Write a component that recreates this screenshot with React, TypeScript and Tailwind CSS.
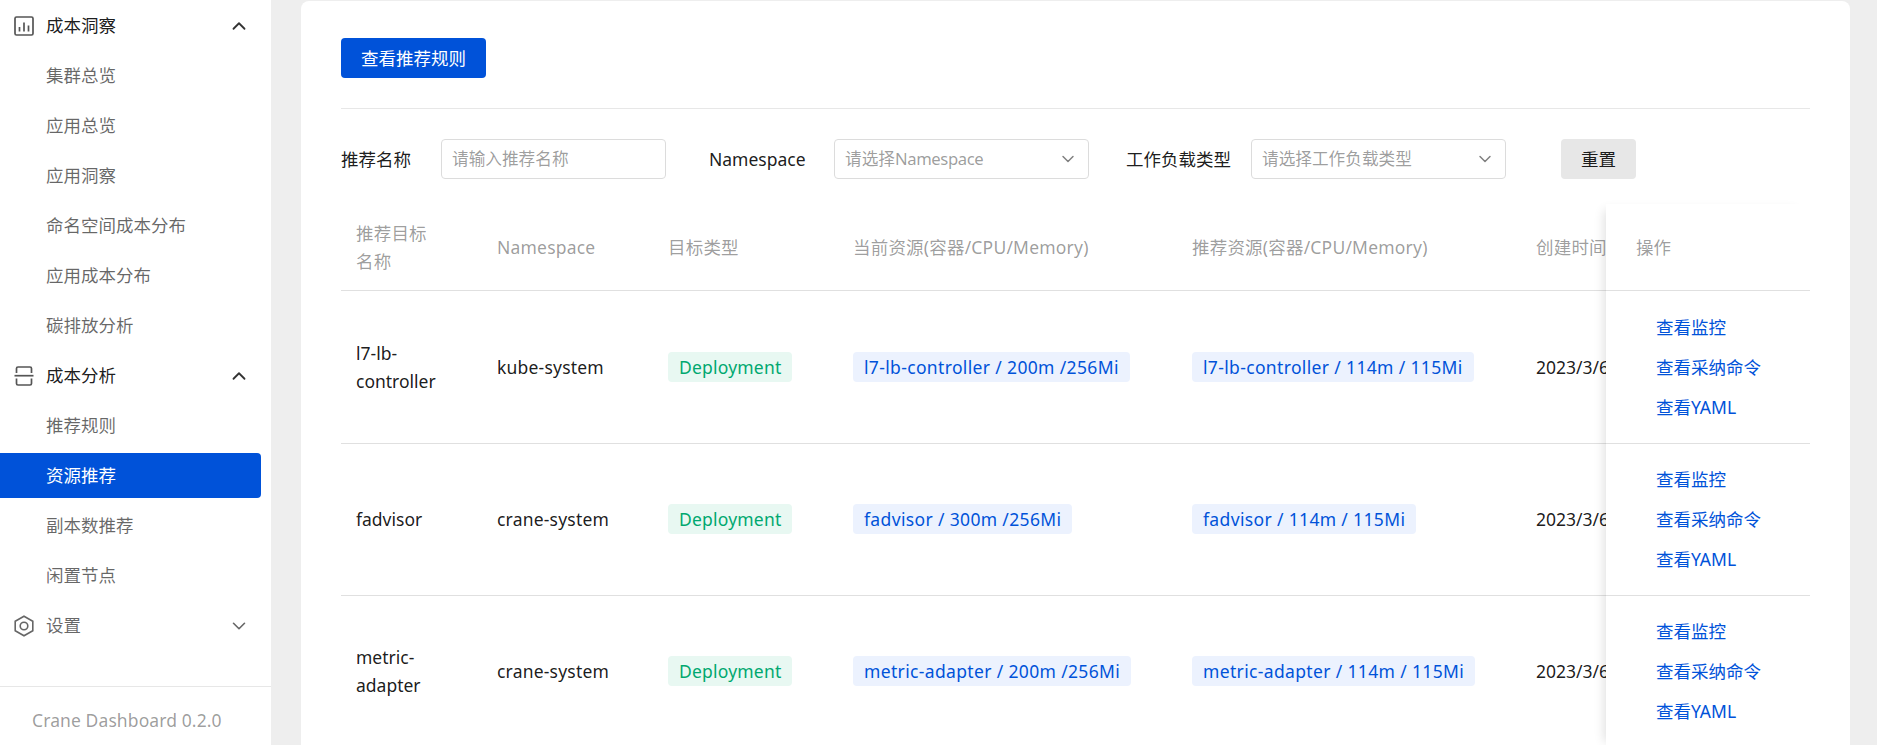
import { ChevronDown, ChevronUp } from "lucide-react";

const font = { fontFamily: '"Noto Sans", "Noto Sans CJK SC", sans-serif' };

const rows = [
	{
		name: ["l7-lb-", "controller"],
		ns: "kube-system",
		current: "l7-lb-controller / 200m /256Mi",
		recommended: "l7-lb-controller / 114m / 115Mi",
		height: "h-[152.5px]",
	},
	{
		name: ["fadvisor"],
		ns: "crane-system",
		current: "fadvisor / 300m /256Mi",
		recommended: "fadvisor / 114m / 115Mi",
		height: "h-[152px]",
	},
	{
		name: ["metric-", "adapter"],
		ns: "crane-system",
		current: "metric-adapter / 200m /256Mi",
		recommended: "metric-adapter / 114m / 115Mi",
		height: "h-[152px]",
	},
];

function NavGroup({ label, open, icon }: { label: string; open: boolean; icon: React.ReactNode }) {
	return (
		<div className="flex h-[45px] items-center pl-[14px] pr-[21px] text-[17.5px] text-black/90">
			<span className="w-[32px]">{icon}</span>
			<span className={open ? "flex-1" : "flex-1 text-black/60"}>{label}</span>
			{open ? (
				<ChevronUp className="h-[22px] w-[22px] text-black/80" />
			) : (
				<ChevronDown className="h-[22px] w-[22px] text-black/60" strokeWidth={1.75} />
			)}
		</div>
	);
}

function NavItem({ label, active }: { label: string; active?: boolean }) {
	return (
		<div
			className={
				active
					? "mr-[10px] flex h-[45px] items-center rounded-r-[4px] bg-[#0052d9] pl-[46px] text-[17.5px] text-white"
					: "flex h-[45px] items-center pl-[46px] text-[17.5px] text-black/60"
			}
		>
			{label}
		</div>
	);
}

function Sidebar() {
	return (
		<aside className="flex h-[745px] w-[271px] shrink-0 flex-col bg-white">
			<nav className="flex flex-1 flex-col gap-[5px] pt-[3px]">
				<NavGroup
					label="成本洞察"
					open
					icon={
						<svg className="block" width="20" height="20" viewBox="0 0 20 20" fill="none" stroke="#555" strokeWidth="1.7">
							<rect x="1" y="1" width="18" height="18" rx="1.5" />
							<path d="M5.5 15.5V11M10 15.5V6.5M14.5 15.5V9.5" />
						</svg>
					}
				/>
				<NavItem label="集群总览" />
				<NavItem label="应用总览" />
				<NavItem label="应用洞察" />
				<NavItem label="命名空间成本分布" />
				<NavItem label="应用成本分布" />
				<NavItem label="碳排放分析" />
				<NavGroup
					label="成本分析"
					open
					icon={
						<svg className="block" width="20" height="20" viewBox="0 0 20 20" fill="none" stroke="#555" strokeWidth="1.7">
							<path d="M2.5 7V2.5A1.5 1.5 0 0 1 4 1h12a1.5 1.5 0 0 1 1.5 1.5V7" />
							<path d="M0.5 9.7h19" />
							<path d="M2.5 12.5V17.5A1.5 1.5 0 0 0 4 19h12a1.5 1.5 0 0 0 1.5-1.5V12.5" />
						</svg>
					}
				/>
				<NavItem label="推荐规则" />
				<NavItem label="资源推荐" active />
				<NavItem label="副本数推荐" />
				<NavItem label="闲置节点" />
				<NavGroup
					label="设置"
					open={false}
					icon={
						<svg className="block" width="20" height="22" viewBox="0 0 20 22" fill="none" stroke="#666" strokeWidth="1.6">
							<path d="M10 1.2l8.8 5v9.6L10 20.8l-8.8-5V6.2z" />
							<circle cx="10" cy="11" r="3.8" />
						</svg>
					}
				/>
			</nav>
			<div className="flex h-[59px] items-center border-t border-[#e7e7e7] pl-[32px] pt-[9px] text-[17.5px] tracking-[0.1px] text-black/40">
				Crane Dashboard 0.2.0
			</div>
		</aside>
	);
}

function Select({ prefix, latin }: { prefix: string; latin?: string }) {
	return (
		<div className="flex h-[40px] w-[255px] items-center justify-between rounded-[4px] border border-[#dcdcdc] pl-[10px] pr-[10px] text-[16.67px] text-black/40">
			<span className="pb-[2px]">
				{prefix}
				{latin && <span className="tracking-[-0.4px]">{latin}</span>}
			</span>
			<ChevronDown className="h-[20px] w-[20px] text-black/50" strokeWidth={1.75} />
		</div>
	);
}

function Filters() {
	return (
		<div className="flex h-[40px] items-center text-[17.5px] text-black/90">
			<span className="w-[100px]">推荐名称</span>
			<div className="flex h-[40px] w-[225px] items-center rounded-[4px] border border-[#dcdcdc] pb-[2px] pl-[10px] text-[16.67px] text-black/40">
				请输入推荐名称
			</div>
			<span className="ml-[43px] w-[125px]">Namespace</span>
			<Select prefix="请选择" latin="Namespace" />
			<span className="ml-[37px] w-[125px]">工作负载类型</span>
			<Select prefix="请选择工作负载类型" />
			<button className="ml-[55px] h-[40px] w-[75px] rounded-[4px] bg-[#e7e7e7] text-[17.5px]">重置</button>
		</div>
	);
}

function Tag({ text, green }: { text: string; green?: boolean }) {
	return (
		<span
			className={
				green
					? "inline-flex h-[30px] items-center rounded-[4px] bg-[#e8f8f2] px-[11px] text-[17.5px] tracking-[0.2px] text-[#00a870]"
					: "inline-flex h-[30px] items-center whitespace-nowrap rounded-[4px] bg-[#ecf2fe] px-[11px] text-[17.5px] tracking-[0.35px] text-[#0052d9]"
			}
		>
			{text}
		</span>
	);
}

function Table() {
	return (
		<div className="mt-[25px] flex">
			<div className="w-[1265px] shrink-0 overflow-hidden">
				<div className="flex h-[87px] items-center border-b border-[#e0e0e0] text-[17.5px] tracking-[0.2px] text-black/40">
					<div className="w-[156px] shrink-0 pl-[15px] pr-[65px] leading-[28px]">推荐目标名称</div>
					<div className="w-[171px] shrink-0">Namespace</div>
					<div className="w-[185px] shrink-0">目标类型</div>
					<div className="w-[339px] shrink-0">当前资源(容器/CPU/Memory)</div>
					<div className="w-[344px] shrink-0 whitespace-nowrap">推荐资源(容器/CPU/Memory)</div>
					<div className="shrink-0 whitespace-nowrap">创建时间</div>
				</div>
				{rows.map((r) => (
					<div key={r.current} className={`flex items-center border-b border-[#e0e0e0] text-[17.5px] text-black/90 ${r.height}`}>
						<div className="w-[156px] shrink-0 pl-[15px] leading-[28px]">
							{r.name.map((n) => (
								<div key={n}>{n}</div>
							))}
						</div>
						<div className="w-[171px] shrink-0 tracking-[0.2px]">{r.ns}</div>
						<div className="w-[185px] shrink-0">
							<Tag text="Deployment" green />
						</div>
						<div className="w-[339px] shrink-0">
							<Tag text={r.current} />
						</div>
						<div className="w-[344px] shrink-0">
							<Tag text={r.recommended} />
						</div>
						<div className="shrink-0 whitespace-nowrap">2023/3/6 17:30</div>
					</div>
				))}
			</div>
			<div className="relative flex-1 bg-white shadow-[-8px_0_10px_-6px_rgba(0,0,0,0.12)]">
				<div className="flex h-[87px] items-center border-b border-[#e0e0e0] pl-[30px] text-[17.5px] text-black/40">操作</div>
				{rows.map((r) => (
					<div
						key={r.current}
						className={`flex flex-col justify-center gap-[12px] border-b border-[#e0e0e0] pl-[50px] text-[17.5px] leading-[28px] text-[#0052d9] ${r.height}`}
					>
						<div>查看监控</div>
						<div>查看采纳命令</div>
						<div>查看YAML</div>
					</div>
				))}
			</div>
		</div>
	);
}

export default function App() {
	return (
		<div className="flex h-[745px] overflow-hidden bg-[#eeeeee]" style={font}>
			<Sidebar />
			<main className="ml-[30px] mt-[1px] w-[1549px] overflow-hidden rounded-t-[8px] bg-white px-[40px] pt-[37px]">
				<button className="h-[40px] w-[145px] rounded-[4px] bg-[#0052d9] text-[17.5px] text-white">查看推荐规则</button>
				<div className="mb-[30px] mt-[30px] h-px bg-[#e7e7e7]" />
				<Filters />
				<Table />
			</main>
		</div>
	);
}
